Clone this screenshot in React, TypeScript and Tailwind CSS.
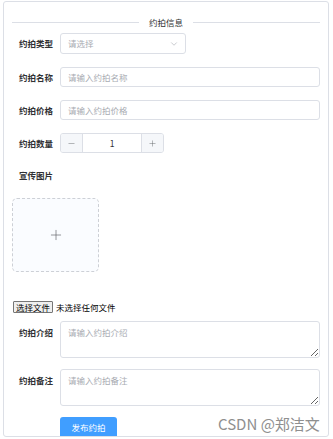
import React from "react";
import { ChevronDown, Plus, Minus } from "lucide-react";

const font = { fontFamily: '"Noto Sans CJK SC", "Noto Sans", sans-serif' };

function Label({ text, top = false }: { text: string; top?: boolean }) {
  return (
    <div
      className={`w-[48px] shrink-0 pr-[7px] text-right text-[8.5px] font-bold text-[#303133] ${
        top ? "pt-[5px] leading-[12px]" : "leading-[20px]"
      }`}
    >
      {text}
    </div>
  );
}

function TextInput({ placeholder }: { placeholder: string }) {
  return (
    <div className="flex-1 h-[20px] border border-[#dcdfe6] rounded-[3px] pl-[7px] flex items-center text-[8.5px] text-[#a8abb2]">
      {placeholder}
    </div>
  );
}

function TextArea({ placeholder }: { placeholder: string }) {
  return (
    <textarea
      placeholder={placeholder}
      className="flex-1 h-[37px] border border-[#dcdfe6] rounded-[3px] pl-[7px] pt-[4px] text-[8.5px] leading-[12px] placeholder:text-[#a8abb2] outline-none resize-y"
      style={font}
    />
  );
}

export default function App() {
  return (
    <div className="relative w-[333px] h-[439px] bg-white overflow-hidden" style={font}>
      <div className="ml-[3px] mt-[1px] w-[326px] h-[436px] border border-[#dcdfe6] rounded-[3px] px-[8px] overflow-hidden">
        {/* divider */}
        <div className="mt-[13px] flex items-center h-[14px]">
          <div className="flex-1 h-px bg-[#dcdfe6]" />
          <span className="px-[10px] text-[8.5px] text-[#303133]">约拍信息</span>
          <div className="flex-1 h-px bg-[#dcdfe6]" />
        </div>

        <div className="mt-[4px] flex">
          <Label text="约拍类型" />
          <div className="w-[126px] h-[21px] border border-[#dcdfe6] rounded-[3px] pl-[7px] pr-[6px] flex items-center justify-between text-[8.5px] text-[#a8abb2]">
            <span>请选择</span>
            <ChevronDown size={10} strokeWidth={1.5} className="text-[#a8abb2]" />
          </div>
        </div>

        <div className="mt-[13px] flex">
          <Label text="约拍名称" />
          <TextInput placeholder="请输入约拍名称" />
        </div>

        <div className="mt-[13px] flex">
          <Label text="约拍价格" />
          <TextInput placeholder="请输入约拍价格" />
        </div>

        <div className="mt-[13px] flex">
          <Label text="约拍数量" />
          <div className="w-[104px] h-[20px] border border-[#dcdfe6] rounded-[3px] flex overflow-hidden">
            <div className="w-[22px] bg-[#f5f7fa] border-r border-[#dcdfe6] flex items-center justify-center text-[#606266]">
              <Minus size={9} strokeWidth={1.2} />
            </div>
            <div className="flex-1 flex items-center justify-center text-[8.5px] text-[#303133]">1</div>
            <div className="w-[22px] bg-[#f5f7fa] border-l border-[#dcdfe6] flex items-center justify-center text-[#606266]">
              <Plus size={9} strokeWidth={1.2} />
            </div>
          </div>
        </div>

        <div className="mt-[12px] w-[48px] pr-[7px] text-right text-[8.5px] font-bold text-[#303133] leading-[20px]">
          宣传图片
        </div>

        <div className="mt-[13px] w-[87px] h-[74px] border border-dashed border-[#cdd0d6] rounded-[5px] bg-[#fafcff] flex items-center justify-center text-[#606266]">
          <Plus size={16} strokeWidth={1} />
        </div>

        <div className="mt-[29px] flex items-center h-[12px] text-[8.5px] text-black">
          <span className="ml-[1px] h-[12px] px-[2px] border border-[#767676] bg-[#efefef] rounded-[1px] leading-[10px] flex items-center">
            选择文件
          </span>
          <span className="ml-[3px]">未选择任何文件</span>
        </div>

        <div className="mt-[8px] flex">
          <Label text="约拍介绍" top />
          <TextArea placeholder="请输入约拍介绍" />
        </div>

        <div className="mt-[11px] flex">
          <Label text="约拍备注" top />
          <TextArea placeholder="请输入约拍备注" />
        </div>

        <div className="mt-[11px] ml-[48px] w-[57px] h-[21px] rounded-[3px] bg-[#409eff] text-white text-[8.5px] flex items-center justify-center">
          发布约拍
        </div>
      </div>

      <div className="absolute left-[218px] top-[414px] text-[15px] text-[#8f8f8f] leading-[20px]">
        CSDN @郑洁文
      </div>
    </div>
  );
}
